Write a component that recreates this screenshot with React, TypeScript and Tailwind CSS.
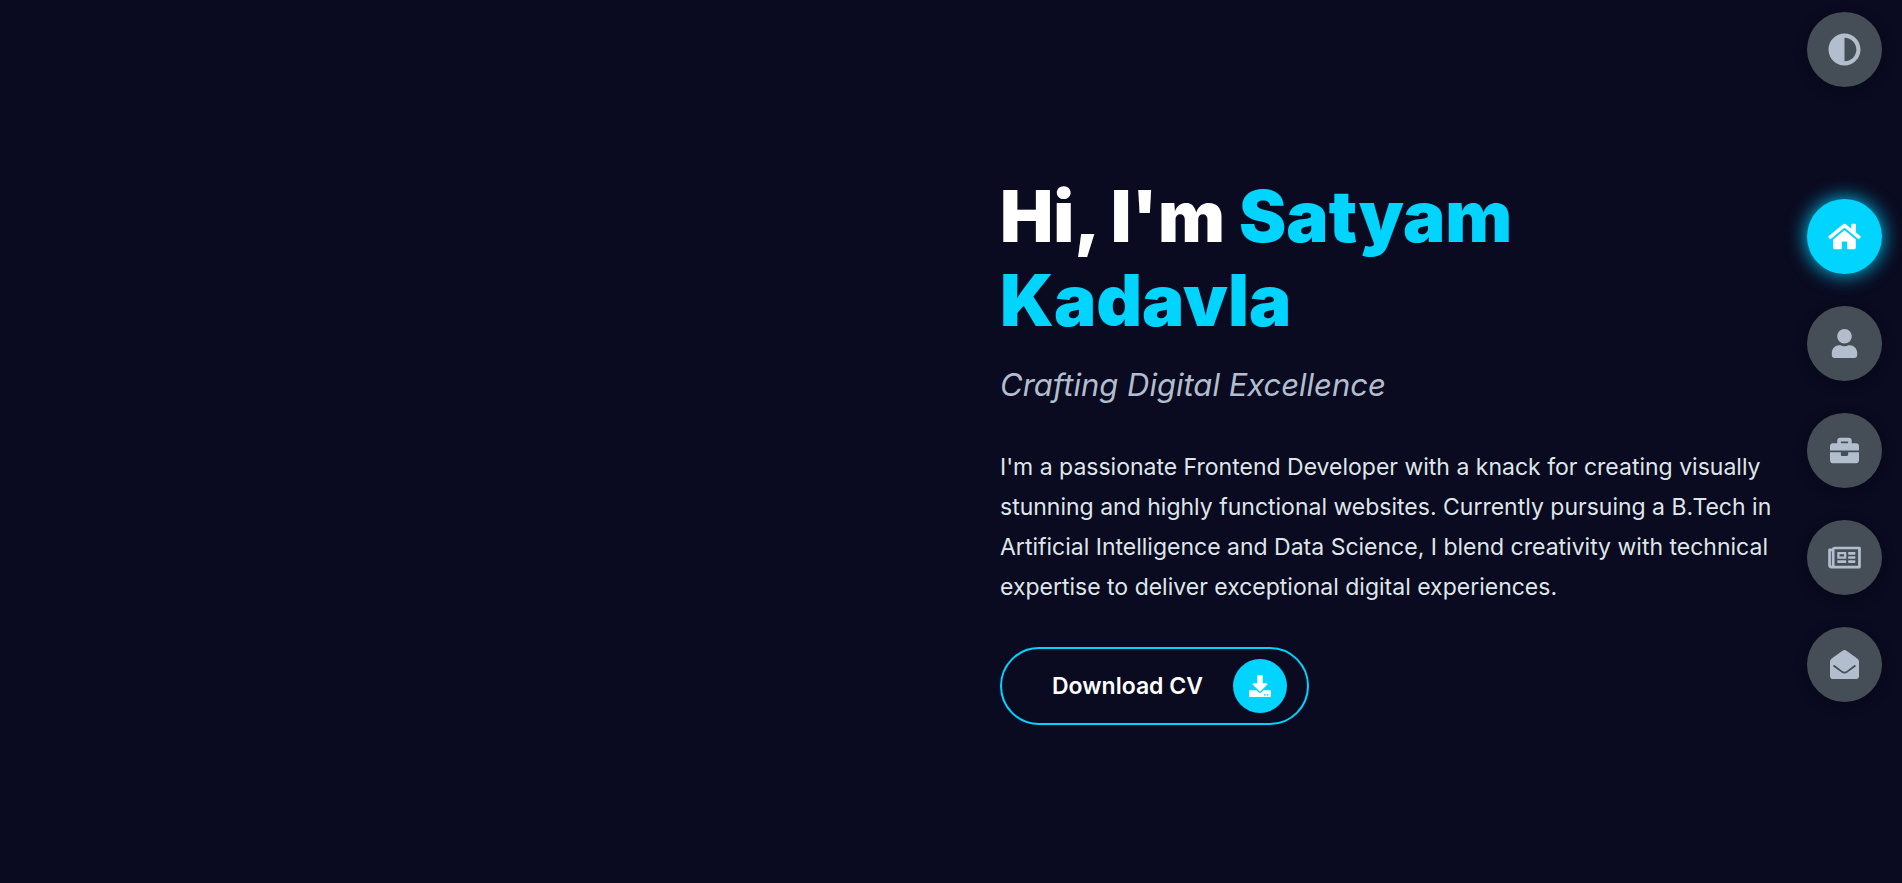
import { FaAdjust, FaBriefcase, FaDownload, FaUser } from "react-icons/fa";

function HomeIcon() {
  return (
    <svg viewBox="0 0 576 512" fill="currentColor" aria-hidden="true" className="h-[29px] w-[33px]">
      <path d="M488 312.7V456c0 13.3-10.7 24-24 24H348c-6.6 0-12-5.4-12-12V356c0-6.6-5.4-12-12-12h-72c-6.6 0-12 5.4-12 12v112c0 6.6-5.4 12-12 12H112c-13.3 0-24-10.7-24-24V312.7c0-3.6 1.6-7 4.4-9.3l188-154.8c4.4-3.6 10.8-3.6 15.3 0l188 154.8c2.7 2.3 4.3 5.7 4.3 9.3zm83.6-60.9L488 182.9V44.4c0-6.6-5.4-12-12-12h-56c-6.6 0-12 5.4-12 12V117l-89.5-73.7c-17.7-14.6-43.3-14.6-61 0L4.4 251.8c-5.1 4.2-5.8 11.8-1.6 16.9l25.5 31c4.2 5.1 11.8 5.8 16.9 1.6l235.2-193.7c4.4-3.6 10.8-3.6 15.3 0l235.2 193.7c5.1 4.2 12.7 3.5 16.9-1.6l25.5-31c4.2-5.2 3.4-12.7-1.7-16.9z" />
    </svg>
  );
}

function UserIcon() {
  return <FaUser className="size-[29px]" />;
}

function BriefcaseIcon() {
  return <FaBriefcase className="size-[29px]" />;
}

function NewspaperIcon() {
  return (
    <svg viewBox="0 0 576 512" fill="currentColor" aria-hidden="true" className="h-[29px] w-[33px]">
      <path d="M552 64H112c-20.858 0-38.643 13.377-45.248 32H24c-13.255 0-24 10.745-24 24v272c0 30.928 25.072 56 56 56h496c13.255 0 24-10.745 24-24V88c0-13.255-10.745-24-24-24zM48 392V144h16v248c0 4.411-3.589 8-8 8s-8-3.589-8-8zm480 8H111.422c.374-2.614.578-5.283.578-8V112h416v288zM172 280h136c6.627 0 12-5.373 12-12v-96c0-6.627-5.373-12-12-12H172c-6.627 0-12 5.373-12 12v96c0 6.627 5.373 12 12 12zm28-80h80v40h-80v-40zm-40 140v-24c0-6.627 5.373-12 12-12h136c6.627 0 12 5.373 12 12v24c0 6.627-5.373 12-12 12H172c-6.627 0-12-5.373-12-12zm192 0v-24c0-6.627 5.373-12 12-12h104c6.627 0 12 5.373 12 12v24c0 6.627-5.373 12-12 12H364c-6.627 0-12-5.373-12-12zm0-144v-24c0-6.627 5.373-12 12-12h104c6.627 0 12 5.373 12 12v24c0 6.627-5.373 12-12 12H364c-6.627 0-12-5.373-12-12zm0 72v-24c0-6.627 5.373-12 12-12h104c6.627 0 12 5.373 12 12v24c0 6.627-5.373 12-12 12H364c-6.627 0-12-5.373-12-12z" />
    </svg>
  );
}

function EnvelopeIcon() {
  return (
    <svg viewBox="0 0 512 512" fill="currentColor" aria-hidden="true" className="size-[29px]">
      <path d="M512 464c0 26.51-21.49 48-48 48H48c-26.51 0-48-21.49-48-48V200.724a48 48 0 0 1 18.387-37.776c24.913-19.529 45.501-35.365 164.2-121.511C199.412 29.17 232.797-.347 256 .003c23.198-.354 56.596 29.172 73.413 41.433 118.687 86.137 139.303 101.995 164.2 121.512A48 48 0 0 1 512 200.724V464zm-65.666-196.605c-2.563-3.728-7.7-4.595-11.339-1.907-22.845 16.873-55.462 40.705-105.582 77.079-16.825 12.266-50.21 41.781-73.413 41.43-23.211.344-56.559-29.143-73.413-41.43-50.114-36.37-82.734-60.204-105.582-77.079-3.639-2.688-8.776-1.821-11.339 1.907l-9.072 13.196a7.998 7.998 0 0 0 1.839 10.967c22.887 16.899 55.454 40.69 105.303 76.868 20.274 14.781 56.524 47.813 92.264 47.573 35.724.242 71.961-32.771 92.263-47.573 49.85-36.179 82.418-59.97 105.303-76.868a7.998 7.998 0 0 0 1.839-10.967l-9.071-13.196z" />
    </svg>
  );
}

const links = [
  { id: "home", label: "Home", Icon: HomeIcon, active: true },
  { id: "about", label: "About", Icon: UserIcon, active: false },
  { id: "portfolio", label: "Portfolio", Icon: BriefcaseIcon, active: false },
  { id: "blogs", label: "Blogs", Icon: NewspaperIcon, active: false },
  { id: "contact", label: "Contact", Icon: EnvelopeIcon, active: false },
];

const control = "flex size-[75px] items-center justify-center rounded-full";
const idle = "bg-[#454e56] text-[#b2becd] shadow-[0_3px_15px_rgba(0,0,0,0.2)]";
const current = "bg-[#00d4ff] text-white shadow-[0_0_20px_#00d4ff]";

export default function App() {
  return (
    <div className="flex min-h-screen bg-[#0a0a20] font-['Inter',sans-serif]">
      <main id="home" className="grid flex-1 grid-cols-[1000fr_779fr] items-start">
        <section className="col-start-2 pt-[174px]">
          <h1 className="text-[71px] leading-[84px] font-black text-white">
            Hi, I'm <span className="text-[#00d4ff]">Satyam</span> <span className="text-[#00d4ff]">Kadavla</span>
          </h1>
          <p className="mt-5 text-[31px] leading-[45px] text-[#b2becd] italic">Crafting Digital Excellence</p>
          <p className="mt-10 text-[23px] leading-[40px] text-[#dfe6e9]">
            I'm a passionate Frontend Developer with a knack for creating visually stunning and highly functional
            websites. Currently pursuing a B.Tech in Artificial Intelligence and Data Science, I blend creativity with
            technical expertise to deliver exceptional digital experiences.
          </p>
          <a
            href="#cv"
            className="mt-10 flex h-[78px] w-fit items-center gap-[30px] rounded-full border-2 border-[#00d4ff] pr-5 pl-[50px] text-[23px] font-semibold text-white"
          >
            Download CV
            <span className="flex size-[54px] items-center justify-center rounded-full bg-[#00d4ff]">
              <FaDownload className="size-[22px]" />
            </span>
          </a>
        </section>
      </main>
      <aside className="flex shrink-0 flex-col gap-[112px] pt-3 pr-5 pl-7">
        <button type="button" aria-label="Toggle theme" className={`${control} ${idle}`}>
          <FaAdjust className="size-[33px]" />
        </button>
        <nav className="flex flex-col gap-8">
          {links.map(({ id, label, Icon, active }) => (
            <a key={id} href={`#${id}`} aria-label={label} className={`${control} ${active ? current : idle}`}>
              <Icon />
            </a>
          ))}
        </nav>
      </aside>
    </div>
  );
}
